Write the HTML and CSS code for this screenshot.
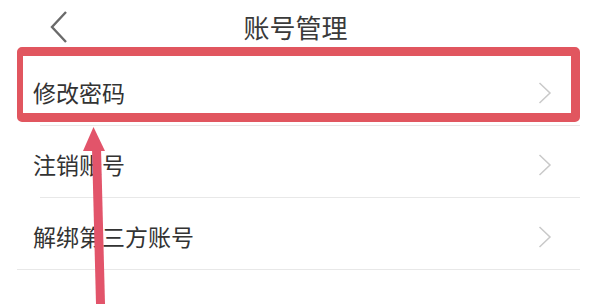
FILE: index.html
```html
<!DOCTYPE html>
<html lang="zh-CN">
<head>
  <meta charset="UTF-8">
  <meta name="viewport" content="width=device-width, initial-scale=1.0">
  <title>账号管理</title>
  <link rel="stylesheet" href="styles.css">
</head>
<body>
<div class="screen">
  <header class="nav-bar">
    <button class="nav-back" aria-label="返回">
      <svg width="18" height="32" viewBox="0 0 18 32">
        <polyline points="16,1 2,16 16,31" fill="none" stroke="#6a6a6a" stroke-width="2.4"/>
      </svg>
    </button>
    <h1 class="nav-title">账号管理</h1>
    <span></span>
  </header>

  <ul class="menu-list">
    <li class="menu-item">
      <span class="menu-label">修改密码</span>
      <svg class="menu-arrow" width="14" height="22" viewBox="0 0 14 22">
        <polyline points="1.5,1 12,11 1.5,21" fill="none" stroke="#c9c9c9" stroke-width="1.5"/>
      </svg>
    </li>
    <li class="menu-item">
      <span class="menu-label">注销账号</span>
      <svg class="menu-arrow" width="14" height="22" viewBox="0 0 14 22">
        <polyline points="1.5,1 12,11 1.5,21" fill="none" stroke="#c9c9c9" stroke-width="1.5"/>
      </svg>
    </li>
    <li class="menu-item">
      <span class="menu-label">解绑第三方账号</span>
      <svg class="menu-arrow" width="14" height="22" viewBox="0 0 14 22">
        <polyline points="1.5,1 12,11 1.5,21" fill="none" stroke="#c9c9c9" stroke-width="1.5"/>
      </svg>
    </li>
  </ul>

  <!-- annotation drawn over the screenshot -->
  <div class="highlight-box"></div>
  <svg class="pointer-arrow" width="591" height="304" viewBox="0 0 591 304">
    <polygon points="92,148 101,148 105,304 96,304" fill="#e2546a"/>
    <polygon points="93.5,127 83,151 105,151" fill="#e2546a"/>
  </svg>
</div>
</body>
</html>
```

FILE: styles.css
```css
* {
  box-sizing: border-box;
}

html, body {
  margin: 0;
  background: #fff;
}

.screen {
  position: relative;
  width: 591px;
  height: 304px;
  overflow: hidden;
  font-family: "Noto Sans CJK SC", "Noto Sans", sans-serif;
  color: #333;
}

/* top bar */
.nav-bar {
  display: grid;
  grid-template-columns: 1fr auto 1fr;
  align-items: center;
  height: 54px;
}

.nav-back {
  justify-self: start;
  margin: 0 0 0 50px;
  padding: 0;
  border: 0;
  background: none;
  display: flex;
}

.nav-title {
  margin: 0;
  font-size: 26px;
  font-weight: normal;
  line-height: 1;
  color: #3a3a3a;
}

/* settings list */
.menu-list {
  list-style: none;
  margin: 0 0 0 17px;
  padding: 0;
  width: 563px;
}

.menu-item {
  height: 72px;
  padding: 5px 28px 0 16px;
  display: flex;
  align-items: center;
  justify-content: space-between;
  background: linear-gradient(#e8e8e8, #e8e8e8) no-repeat 23px 100% / calc(100% - 23px) 1px;
}

.menu-item:last-child {
  background-position: 0 100%;
  background-size: 100% 1px;
}

.menu-label {
  font-size: 23px;
  line-height: 1;
  color: #333;
}

.menu-arrow {
  display: block;
}

/* red annotation */
.highlight-box {
  position: absolute;
  left: 17px;
  top: 47px;
  width: 563px;
  height: 75px;
  border: 9px solid #e1565f;
  border-left-width: 6px;
  border-radius: 5px;
  pointer-events: none;
}

.pointer-arrow {
  position: absolute;
  left: 0;
  top: 0;
  pointer-events: none;
}
```
